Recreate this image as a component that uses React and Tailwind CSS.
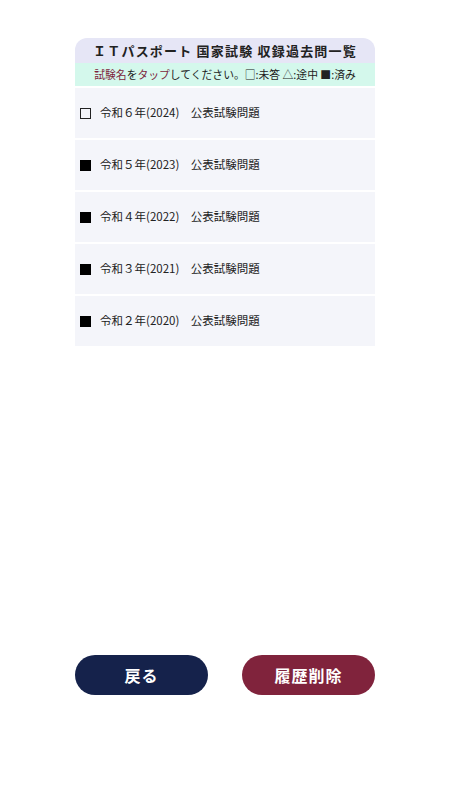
import React from 'react';

const exams = [
  { id: 6, label: '令和６年(2024)　公表試験問題', status: 'none' },
  { id: 5, label: '令和５年(2023)　公表試験問題', status: 'done' },
  { id: 4, label: '令和４年(2022)　公表試験問題', status: 'done' },
  { id: 3, label: '令和３年(2021)　公表試験問題', status: 'done' },
  { id: 2, label: '令和２年(2020)　公表試験問題', status: 'done' },
];

const StatusMark = ({ status }) => {
  if (status === 'done') {
    return <span className="block w-[11px] h-[11px] bg-black" />;
  }
  return <span className="block w-[11px] h-[11px] border border-[#222]" />;
};

export default function App() {
  return (
    <div
      className="h-[800px] w-[450px] bg-white flex flex-col items-center pt-[38px] pb-[105px] text-[#222]"
      style={{ fontFamily: '"Noto Sans CJK JP", "Noto Sans", sans-serif' }}
    >
      <div className="w-[300px]">
        <div className="h-[25px] rounded-t-[12px] bg-[#e6e6f6] flex items-center justify-center">
          <h1 className="text-[13px] font-bold tracking-[1.2px] leading-none">
            ＩＴパスポート 国家試験 収録過去問一覧
          </h1>
        </div>
        <div className="h-[23px] bg-[#d4f8ec] flex items-center justify-center text-[10.8px] leading-none">
          <span className="text-[#7e1f3c]">試験名</span>
          <span>を</span>
          <span className="text-[#7e1f3c]">タップ</span>
          <span>してください。□:未答 △:途中 ■:済み</span>
        </div>
        <ul className="mt-[2px] flex flex-col gap-[2px]">
          {exams.map((exam) => (
            <li
              key={exam.id}
              className="h-[50px] bg-[#f4f5fa] flex items-center pl-[5px] gap-[9px] text-[11.5px]"
            >
              <StatusMark status={exam.status} />
              <span>{exam.label}</span>
            </li>
          ))}
        </ul>
      </div>

      <div className="mt-auto w-[300px] flex justify-between">
        <button className="w-[133px] h-[40px] rounded-full bg-[#15224b] text-white text-[16px] font-bold tracking-[1px]">
          戻る
        </button>
        <button className="w-[133px] h-[40px] rounded-full bg-[#80233c] text-white text-[16px] font-bold tracking-[1px]">
          履歴削除
        </button>
      </div>
    </div>
  );
}
